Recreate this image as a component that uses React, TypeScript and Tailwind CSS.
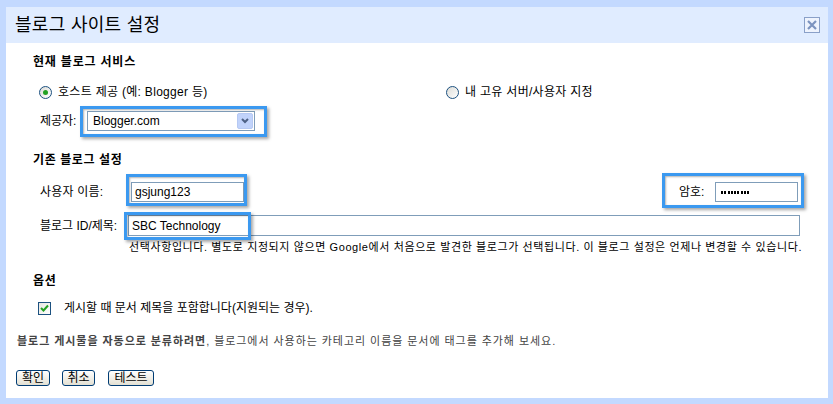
import React from 'react'

const font = "font-['Liberation_Sans','Noto_Sans_CJK_KR',sans-serif]"

function Radio({ checked }: { checked?: boolean }) {
  return (
    <span className="w-[13px] h-[13px] rounded-full border border-[#1c5180] bg-gradient-to-br from-[#dcdcd7] to-white flex items-center justify-center shrink-0">
      {checked && <span className="w-[5px] h-[5px] rounded-full bg-[#21a121]" />}
    </span>
  )
}

function Highlight({ className }: { className: string }) {
  return (
    <div
      className={`absolute pointer-events-none border-[3px] border-[#3b99f0] shadow-[2px_2px_3px_rgba(0,0,0,0.35),inset_1px_1px_2px_rgba(0,0,0,0.3)] ${className}`}
    />
  )
}

function XpButton({ label, className }: { label: string; className?: string }) {
  return (
    <button
      className={`h-[16px] border border-[#003c74] rounded-[3px] bg-gradient-to-b from-white to-[#e3e0d3] text-[12px] leading-none text-black flex items-center justify-center ${className ?? ''}`}
    >
      {label}
    </button>
  )
}

export default function App() {
  return (
    <div className={`w-[833px] h-[404px] bg-[#c3d9ff] pt-[7px] pl-[6px] pr-[5px] pb-[6px] ${font} text-black`}>
      <div className="h-full bg-white flex flex-col">
        {/* Header */}
        <div className="h-[36px] bg-[#e0ecff] flex items-center justify-between pl-[9px] pr-[8px] shrink-0">
          <span className="text-[18px] tracking-[0.3px] leading-none">블로그 사이트 설정</span>
          <span className="w-[16px] h-[16px] border border-[#8aa0c8] bg-[#eef3fd] flex items-center justify-center">
            <svg width="10" height="10" viewBox="0 0 10 10">
              <path d="M1 1L9 9M9 1L1 9" stroke="#7c93bf" strokeWidth="2.2" />
            </svg>
          </span>
        </div>

        <div className="pl-[10px] flex flex-col">
          {/* 현재 블로그 서비스 */}
          <div className="mt-[9px] h-[20px] ml-[17px] flex items-center text-[12px] font-bold tracking-[0.8px]">
            현재 블로그 서비스
          </div>
          <div className="mt-[10px] h-[20px] ml-[23px] flex items-center text-[12px] tracking-[0.3px]">
            <div className="w-[407px] flex items-center">
              <Radio checked />
              <span className="ml-[6px]">호스트 제공 (예: Blogger 등)</span>
            </div>
            <Radio />
            <span className="ml-[6px]">내 고유 서버/사용자 지정</span>
          </div>
          <div className="mt-[9px] h-[20px] ml-[24px] flex items-center text-[12px]">
            <span className="w-[47px]">제공자:</span>
            <div className="relative w-[168px] h-[20px] border border-[#7f9db9] flex items-center justify-between pl-[5px] pr-[1px]">
              <span>Blogger.com</span>
              <span className="w-[16px] h-[16px] bg-[#c1d3fb] border border-[#b6c9f3] rounded-[2px] flex items-center justify-center">
                <svg width="8" height="6" viewBox="0 0 8 6">
                  <path d="M1 1L4 4L7 1" stroke="#4d6185" strokeWidth="2" fill="none" />
                </svg>
              </span>
              <Highlight className="-top-[6px] -left-[8px] -right-[13px] -bottom-[7px]" />
            </div>
          </div>

          {/* 기존 블로그 설정 */}
          <div className="mt-[19px] h-[20px] ml-[17px] flex items-center text-[12px] font-bold tracking-[0.6px]">
            기존 블로그 설정
          </div>
          <div className="mt-[12px] h-[20px] ml-[24px] w-[758px] flex items-center justify-between text-[12px]">
            <div className="flex items-center">
              <span className="w-[91px] tracking-[0.2px]">사용자 이름:</span>
              <div className="relative w-[113px] h-[20px] border border-[#7f9db9] flex items-center pl-[3px]">
                gsjung123
                <Highlight className="-top-[9px] -left-[6px] -right-[4px] -bottom-[5px]" />
              </div>
            </div>
            <div className="relative flex items-center">
              <span className="w-[36px]">암호:</span>
              <div className="w-[83px] h-[20px] border border-[#7f9db9] flex items-center pl-[5px] gap-[1.3px]">
                {Array.from({ length: 9 }).map((_, i) => (
                  <span key={i} className="w-[2px] h-[3px] bg-black" />
                ))}
              </div>
              <Highlight className="-top-[9px] -left-[17px] -right-[6px] -bottom-[6px]" />
            </div>
          </div>
          <div className="mt-[13px] h-[21px] ml-[24px] w-[760px] flex items-center text-[12px]">
            <span className="w-[88px]">블로그 ID/제목:</span>
            <div className="relative flex-1 h-[21px] border border-[#7f9db9] flex items-center pl-[3px]">
              SBC Technology
              <Highlight className="-top-[4px] -left-[5px] w-[127px] h-[28px]" />
            </div>
          </div>
          <div className="mt-[4px] h-[14px] ml-[113px] flex items-center text-[11px] tracking-[0.6px] whitespace-nowrap">
            선택사항입니다. 별도로 지정되지 않으면 Google에서 처음으로 발견한 블로그가 선택됩니다. 이 블로그 설정은 언제나 변경할 수 있습니다.
          </div>

          {/* 옵션 */}
          <div className="mt-[17px] h-[20px] ml-[17px] flex items-center text-[12px] font-bold tracking-[0.6px]">
            옵션
          </div>
          <div className="mt-[7px] h-[20px] ml-[22px] flex items-center text-[12px]">
            <span className="w-[13px] h-[13px] border border-[#1c5180] bg-gradient-to-br from-[#e6e6e0] to-white flex items-center justify-center">
              <svg width="9" height="8" viewBox="0 0 9 8">
                <path d="M1 4L3.5 6.5L8 1.5" stroke="#21a121" strokeWidth="2" fill="none" />
              </svg>
            </span>
            <span className="ml-[13px]">게시할 때 문서 제목을 포함합니다(지원되는 경우).</span>
          </div>
          <div className="mt-[16px] h-[14px] ml-[1px] flex items-center text-[11px] tracking-[0.95px] text-[#444] whitespace-nowrap">
            <span className="font-bold">블로그 게시물을 자동으로 분류하려면</span>, 블로그에서 사용하는 카테고리 이름을 문서에 태그를 추가해 보세요.
          </div>

          {/* Buttons */}
          <div className="mt-[22px] flex items-center">
            <XpButton label="확인" className="w-[34px]" />
            <XpButton label="취소" className="w-[33px] ml-[12px]" />
            <XpButton label="테스트" className="w-[46px] ml-[13px]" />
          </div>
        </div>
      </div>
    </div>
  )
}
